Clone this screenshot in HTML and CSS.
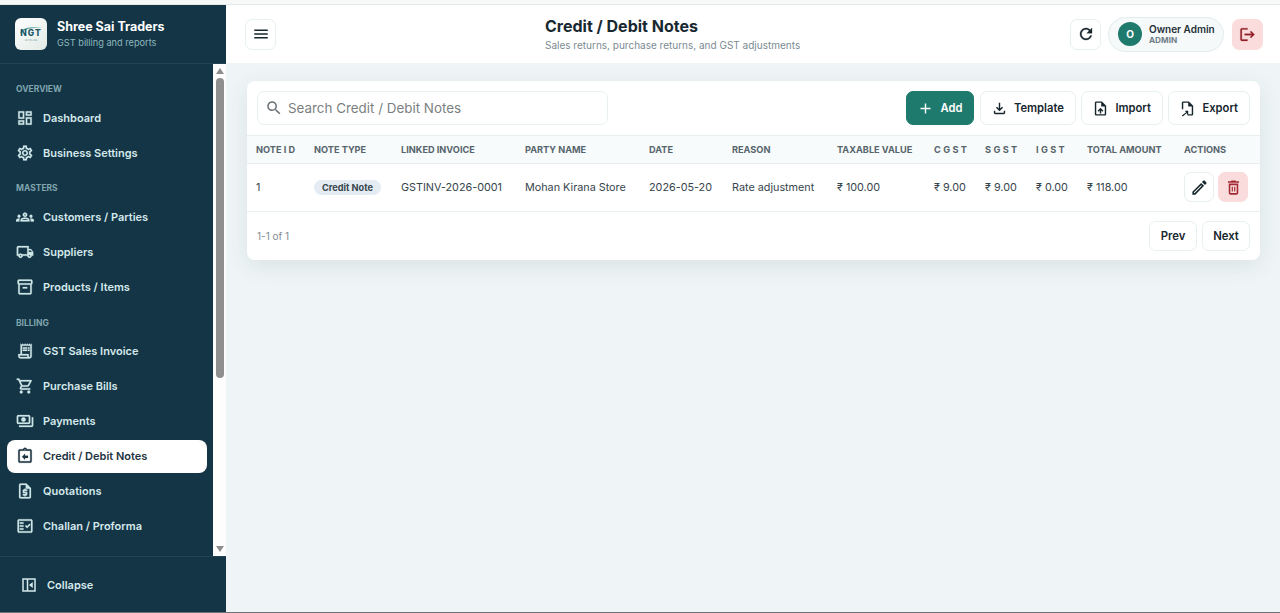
FILE: index.html
```
<!DOCTYPE html>
<html lang="en">
<head>
<meta charset="utf-8">
<title>Credit / Debit Notes</title>
<link rel="stylesheet" href="styles.css">
</head>
<body>
<div class="app">
  <aside class="sidebar">
    <div class="brand">
      <div class="logo">
        <svg class="logo-swoosh" viewBox="0 0 32 32"><path d="M5 15C7 10 15 8 27 10 16 9.5 9 11 6.5 15z"/></svg>
        <span class="logo-text">NGT</span><span class="logo-sub">GST BILLING</span>
      </div>
      <div class="brand-text">
        <div class="brand-name">Shree Sai Traders</div>
        <div class="brand-sub">GST billing and reports</div>
      </div>
    </div>
    <div class="nav-wrap">
      <nav class="nav">
        <div class="section first">OVERVIEW</div>
        <a class="item"><svg viewBox="0 0 24 24"><path d="M19 5v2h-4V5h4M9 5v6H5V5h4m10 8v6h-4v-6h4M9 17v2H5v-2h4M21 3h-8v6h8V3zM11 3H3v10h8V3zm10 8h-8v10h8V11zm-10 4H3v6h8v-6z"/></svg>Dashboard</a>
        <a class="item"><svg viewBox="0 0 24 24"><path d="M19.43 12.98c.04-.32.07-.64.07-.98 0-.34-.03-.66-.07-.98l2.11-1.65c.19-.15.24-.42.12-.64l-2-3.46c-.09-.16-.26-.25-.44-.25-.06 0-.12.01-.17.03l-2.49 1c-.52-.4-1.08-.73-1.69-.98l-.38-2.65C14.46 2.18 14.25 2 14 2h-4c-.25 0-.46.18-.49.42l-.38 2.65c-.61.25-1.17.59-1.69.98l-2.49-1c-.06-.02-.12-.03-.18-.03-.17 0-.34.09-.43.25l-2 3.46c-.13.22-.07.49.12.64l2.11 1.65c-.04.32-.07.65-.07.98 0 .33.03.66.07.98l-2.11 1.65c-.19.15-.24.42-.12.64l2 3.46c.09.16.26.25.44.25.06 0 .12-.01.17-.03l2.49-1c.52.4 1.08.73 1.69.98l.38 2.65c.03.24.24.42.49.42h4c.25 0 .46-.18.49-.42l.38-2.65c.61-.25 1.17-.59 1.69-.98l2.49 1c.06.02.12.03.18.03.17 0 .34-.09.43-.25l2-3.46c.12-.22.07-.49-.12-.64l-2.11-1.65zm-1.98-1.71c.04.31.05.52.05.73 0 .21-.02.43-.05.73l-.14 1.13.89.7 1.08.84-.7 1.21-1.27-.51-1.04-.42-.9.68c-.43.32-.84.56-1.25.73l-1.06.43-.16 1.13-.2 1.35h-1.4l-.19-1.35-.16-1.13-1.06-.43c-.43-.18-.83-.41-1.23-.71l-.91-.7-1.06.43-1.27.51-.7-1.21 1.08-.84.89-.7-.14-1.13c-.03-.31-.05-.54-.05-.74s.02-.43.05-.73l.14-1.13-.89-.7-1.08-.84.7-1.21 1.27.51 1.04.42.9-.68c.43-.32.84-.56 1.25-.73l1.06-.43.16-1.13.2-1.35h1.39l.19 1.35.16 1.13 1.06.43c.43.18.83.41 1.23.71l.91.7 1.06-.43 1.27-.51.7 1.21-1.07.85-.89.7.14 1.13zM12 8c-2.21 0-4 1.79-4 4s1.79 4 4 4 4-1.79 4-4-1.79-4-4-4zm0 6c-1.1 0-2-.9-2-2s.9-2 2-2 2 .9 2 2-.9 2-2 2z"/></svg>Business Settings</a>
        <div class="section">MASTERS</div>
        <a class="item"><svg viewBox="0 0 24 24"><path d="M4 13c1.1 0 2-.9 2-2s-.9-2-2-2-2 .9-2 2 .9 2 2 2zm1.13 1.1C4.76 14.04 4.39 14 4 14c-.99 0-1.93.21-2.78.58C.48 14.9 0 15.62 0 16.43V18h4.5v-1.61c0-.83.23-1.61.63-2.29zM20 13c1.1 0 2-.9 2-2s-.9-2-2-2-2 .9-2 2 .9 2 2 2zm4 3.43c0-.81-.48-1.53-1.22-1.85-.85-.37-1.79-.58-2.78-.58-.39 0-.76.04-1.13.1.4.68.63 1.46.63 2.29V18H24v-1.57zm-7.76-2.78c-1.17-.52-2.61-.9-4.24-.9-1.63 0-3.07.39-4.24.9C6.68 14.13 6 15.21 6 16.39V18h12v-1.61c0-1.18-.68-2.26-1.76-2.74zM8.07 16c.09-.23.13-.39.91-.69.97-.38 1.99-.56 3.02-.56s2.05.18 3.02.56c.77.3.81.46.91.69H8.07zM12 8c.55 0 1 .45 1 1s-.45 1-1 1-1-.45-1-1 .45-1 1-1m0-2c-1.66 0-3 1.34-3 3s1.34 3 3 3 3-1.34 3-3-1.34-3-3-3z"/></svg>Customers / Parties</a>
        <a class="item"><svg viewBox="0 0 24 24"><path d="M20 8h-3V4H3c-1.1 0-2 .9-2 2v11h2c0 1.66 1.34 3 3 3s3-1.34 3-3h6c0 1.66 1.34 3 3 3s3-1.34 3-3h2v-5l-3-4zm-.5 1.5 1.96 2.5H17V9.5h2.5zM6 18c-.55 0-1-.45-1-1s.45-1 1-1 1 .45 1 1-.45 1-1 1zm2.22-3c-.55-.61-1.33-1-2.22-1s-1.67.39-2.22 1H3V6h12v9H8.22zM18 18c-.55 0-1-.45-1-1s.45-1 1-1 1 .45 1 1-.45 1-1 1z"/></svg>Suppliers</a>
        <a class="item"><svg viewBox="0 0 24 24"><path d="M20 2H4c-1 0-2 .9-2 2v3.01c0 .72.43 1.34 1 1.69V20c0 1.1 1.1 2 2 2h14c.9 0 2-.9 2-2V8.7c.57-.35 1-.97 1-1.69V4c0-1.1-1-2-2-2zm-1 18H5V9h14v11zm1-13H4V4h16v3zM9 12h6v2H9z"/></svg>Products / Items</a>
        <div class="section billing">BILLING</div>
        <a class="item"><svg viewBox="0 0 24 24"><path d="M19.5 3.5 18 2l-1.5 1.5L15 2l-1.5 1.5L12 2l-1.5 1.5L9 2 7.5 3.5 6 2v14H3v3c0 1.66 1.34 3 3 3h12c1.66 0 3-1.34 3-3V2l-1.5 1.5zM15 20H6c-.55 0-1-.45-1-1v-1h10v2zm4-1c0 .55-.45 1-1 1s-1-.45-1-1v-3H8V5h11v14zM9 7h6v2H9zM16 7h2v2h-2zM9 10h6v2H9zM16 10h2v2h-2z"/></svg>GST Sales Invoice</a>
        <a class="item"><svg viewBox="0 0 24 24"><path d="M15.55 13c.75 0 1.41-.41 1.75-1.03l3.58-6.49c.37-.66-.11-1.48-.87-1.48H5.21l-.94-2H1v2h2l3.6 7.59-1.35 2.44C4.52 15.37 5.48 17 7 17h12v-2H7l1.1-2h7.45zM6.16 6h12.15l-2.76 5H8.53L6.16 6zM7 18c-1.1 0-1.99.9-1.99 2S5.9 22 7 22s2-.9 2-2-.9-2-2-2zm10 0c-1.1 0-1.99.9-1.99 2s.89 2 1.99 2 2-.9 2-2-.9-2-2-2z"/></svg>Purchase Bills</a>
        <a class="item"><svg viewBox="0 0 24 24"><path d="M19 14V6c0-1.1-.9-2-2-2H3c-1.1 0-2 .9-2 2v8c0 1.1.9 2 2 2h14c1.1 0 2-.9 2-2zm-2 0H3V6h14v8zm-7-7c-1.66 0-3 1.34-3 3s1.34 3 3 3 3-1.34 3-3-1.34-3-3-3zm13 0v11c0 1.1-.9 2-2 2H4v-2h17V7h2z"/></svg>Payments</a>
        <a class="item active"><svg viewBox="0 0 24 24"><path d="M19 3h-4.18C14.4 1.84 13.3 1 12 1s-2.4.84-2.82 2H5c-.14 0-.27.01-.4.04-.39.08-.74.28-1.01.55-.18.18-.33.4-.43.64-.1.23-.16.49-.16.77v14c0 .27.06.54.16.78s.25.45.43.64c.27.27.62.47 1.01.55.13.02.26.03.4.03h14c1.1 0 2-.9 2-2V5c0-1.1-.9-2-2-2zm-7-.25c.41 0 .75.34.75.75s-.34.75-.75.75-.75-.34-.75-.75.34-.75.75-.75zM19 19H5V5h14v14zM12 9l-4 4 4 4v-2.5h4v-3h-4z"/></svg>Credit / Debit Notes</a>
        <a class="item"><svg viewBox="0 0 24 24"><path d="M14 2H6c-1.1 0-1.99.9-1.99 2L4 20c0 1.1.89 2 1.99 2H18c1.1 0 2-.9 2-2V8l-6-6zM6 20V4h7v5h5v11H6zm5-1h2v-1h1c.55 0 1-.45 1-1v-3c0-.55-.45-1-1-1h-3v-1h4v-2h-2V9h-2v1h-1c-.55 0-1 .45-1 1v3c0 .55.45 1 1 1h3v1H9v2h2v1z"/></svg>Quotations</a>
        <a class="item"><svg viewBox="0 0 24 24"><path d="M20 3H4c-1.1 0-2 .9-2 2v14c0 1.1.9 2 2 2h16c1.1 0 2-.9 2-2V5c0-1.1-.9-2-2-2zm0 16H4V5h16v14zM19.41 10.42 17.99 9l-3.17 3.17-1.41-1.42L12 12.16 14.82 15zM5 7h5v2H5zM5 11h5v2H5zM5 15h5v2H5z"/></svg>Challan / Proforma</a>
      </nav>
      <div class="scrollbar">
        <span class="arrow up"></span>
        <div class="track"><div class="thumb"></div></div>
        <span class="arrow down"></span>
      </div>
    </div>
    <div class="collapse">
      <svg viewBox="0 0 24 24"><path d="M3 3h18v18H3V3zm2 2v14h4V5H5zm6 0v14h8V5h-8zm6 3v8l-5-4 5-4z"/></svg>
      Collapse
    </div>
  </aside>
  <main class="main">
    <header class="topbar">
      <button class="btn square"><svg viewBox="0 0 24 24"><path d="M3 18h18v-2H3v2zm0-5h18v-2H3v2zm0-7v2h18V6H3z"/></svg></button>
      <div class="title-block">
        <h1>Credit / Debit Notes</h1>
        <p>Sales returns, purchase returns, and GST adjustments</p>
      </div>
      <div class="top-actions">
        <button class="btn square refresh"><svg viewBox="0 0 24 24"><path d="M17.65 6.35C16.2 4.9 14.21 4 12 4c-4.42 0-7.99 3.58-7.99 8s3.57 8 7.99 8c3.73 0 6.84-2.55 7.73-6h-2.08c-.82 2.33-3.04 4-5.65 4-3.31 0-6-2.69-6-6s2.69-6 6-6c1.66 0 3.14.69 4.22 1.78L13 11h7V4l-2.35 2.35z"/></svg></button>
        <div class="user">
          <span class="avatar">O</span>
          <span class="user-text"><span class="user-name">Owner Admin</span><span class="user-role">ADMIN</span></span>
        </div>
        <button class="btn square danger logout"><svg viewBox="0 0 24 24"><path d="M17 7l-1.41 1.41L18.17 11H8v2h10.17l-2.58 2.58L17 17l5-5zM4 5h8V3H4c-1.1 0-2 .9-2 2v14c0 1.1.9 2 2 2h8v-2H4V5z"/></svg></button>
      </div>
    </header>
    <section class="content">
      <div class="card">
        <div class="toolbar">
          <label class="search">
            <svg viewBox="0 0 24 24"><path d="M15.5 14h-.79l-.28-.27C15.41 12.59 16 11.11 16 9.5 16 5.91 13.09 3 9.5 3S3 5.91 3 9.5 5.91 16 9.5 16c1.61 0 3.09-.59 4.23-1.57l.27.28v.79l5 4.99L20.49 19l-4.99-5zm-6 0C7.01 14 5 11.99 5 9.5S7.01 5 9.5 5 14 7.01 14 9.5 11.99 14 9.5 14z"/></svg>
            <span>Search Credit / Debit Notes</span>
          </label>
          <div class="tools">
            <button class="btn tool primary"><svg viewBox="0 0 24 24"><path d="M19 13h-6v6h-2v-6H5v-2h6V5h2v6h6v2z"/></svg>Add</button>
            <button class="btn tool"><svg viewBox="0 0 24 24"><path d="M18 15v3H6v-3H4v3c0 1.1.9 2 2 2h12c1.1 0 2-.9 2-2v-3h-2zm-1-4-1.41-1.41L13 12.17V4h-2v8.17L8.41 9.59 7 11l5 5 5-5z"/></svg>Template</button>
            <button class="btn tool"><svg viewBox="0 0 24 24"><path d="M14 2H6c-1.1 0-1.99.9-1.99 2L4 20c0 1.1.89 2 1.99 2H18c1.1 0 2-.9 2-2V8l-6-6zm4 18H6V4h7v5h5v11zM8 15.01l1.41 1.41L11 14.84V19h2v-4.16l1.59 1.59L16 15.01 12.01 11 8 15.01z"/></svg>Import</button>
            <button class="btn tool"><svg viewBox="0 0 24 24"><path d="M14 2H6c-1.1 0-2 .9-2 2v9h2V4h7v5h5v11h-6v2h6c1.1 0 2-.9 2-2V8l-6-6zM9 15v2h1.6L4 22l1.4 1.4L11 18.4V20h2v-5H9z"/></svg>Export</button>
          </div>
        </div>
        <table class="grid">
          <colgroup>
            <col class="c58"><col class="c87"><col class="c124"><col class="c124"><col class="c83"><col class="c105"><col class="c97"><col class="c51"><col class="c51"><col class="c51"><col class="c97"><col class="c85">
          </colgroup>
          <thead>
            <tr><th>NOTE I D</th><th>NOTE TYPE</th><th>LINKED INVOICE</th><th>PARTY NAME</th><th>DATE</th><th>REASON</th><th>TAXABLE VALUE</th><th class="sp">C G S T</th><th class="sp">S G S T</th><th class="sp">I G S T</th><th>TOTAL AMOUNT</th><th>ACTIONS</th></tr>
          </thead>
          <tbody>
            <tr>
              <td>1</td><td><span class="pill">Credit Note</span></td><td>GSTINV-2026-0001</td><td>Mohan Kirana Store</td><td>2026-05-20</td><td>Rate adjustment</td><td>₹ 100.00</td><td>₹ 9.00</td><td>₹ 9.00</td><td>₹ 0.00</td><td>₹ 118.00</td>
              <td class="actions-cell"><div class="row-actions">
                <button class="btn icon"><svg viewBox="0 0 24 24"><path d="M3 17.25V21h3.75L17.81 9.94l-3.75-3.75L3 17.25zM5.92 19H5v-.92l9.06-9.06.92.92L5.92 19zM20.71 7.04c.39-.39.39-1.02 0-1.41l-2.34-2.34c-.2-.2-.45-.29-.71-.29s-.51.1-.7.29l-1.83 1.83 3.75 3.75 1.83-1.83z"/></svg></button>
                <button class="btn icon danger"><svg viewBox="0 0 24 24"><path d="M16 9v10H8V9h8m-1.5-6h-5l-1 1H5v2h14V4h-3.5l-1-1zM18 7H6v12c0 1.1.9 2 2 2h8c1.1 0 2-.9 2-2V7zM9.75 11h1.5v6h-1.5zM12.75 11h1.5v6h-1.5z"/></svg></button>
              </div></td>
            </tr>
          </tbody>
        </table>
        <div class="pager">
          <span class="count">1-1 of 1</span>
          <div class="pager-btns"><button class="btn page">Prev</button><button class="btn page">Next</button></div>
        </div>
      </div>
    </section>
  </main>
</div>
</body>
</html>
```
FILE: styles.css
```
* { box-sizing: border-box; }
html, body { height: 100%; }
body { margin: 0; background: #f7f8f8; font-family: Inter, "Liberation Sans", sans-serif; overflow: hidden; }
.app { height: 609px; margin-top: 4px; display: flex; border-top: 1px solid #e4e8e8; border-bottom: 1px solid #6b7378; }
svg { display: block; fill: currentColor; flex: none; }

.sidebar { width: 226px; flex: none; background: #143545; display: flex; flex-direction: column; color: #d8ecef; }
.brand { height: 59px; flex: none; display: flex; align-items: center; gap: 10px; padding: 0 15px; border-bottom: 1px solid #1f4454; }
.logo { position: relative; width: 32px; height: 32px; border-radius: 6px; background: linear-gradient(135deg, #ffffff, #e2ebe6); display: flex; flex-direction: column; align-items: center; justify-content: center; color: #1b5566; }
.logo-swoosh { position: absolute; inset: 0; width: 32px; height: 32px; color: #5fa3a0; }
.logo-text { position: relative; font-size: 8.5px; font-weight: 800; letter-spacing: 1px; line-height: 9px; margin-top: 3px; }
.logo-sub { font-size: 2px; line-height: 4px; color: #7a9aa0; }
.brand-name { font-size: 12.5px; font-weight: 700; color: #fff; line-height: 16px; white-space: nowrap; }
.brand-sub { font-size: 9.2px; line-height: 12px; margin-top: 2px; color: #8fb8bf; white-space: nowrap; }

.nav-wrap { flex: 1; min-height: 0; display: flex; }
.nav { flex: 1; min-width: 0; padding: 0 6px 0 7px; overflow: hidden; }
.section { font-size: 8.5px; font-weight: 700; color: #7fa5ae; line-height: 12px; padding-left: 9px; margin-top: 12px; margin-bottom: 7px; }
.section.first { margin-top: 19px; }
.section.billing { margin-top: 13px; margin-bottom: 6px; }
.item { display: flex; align-items: center; gap: 9px; height: 33px; margin-bottom: 2px; padding: 0 0 2px 9px; border-radius: 8px; font-size: 11px; font-weight: 600; color: #d5e9ec; white-space: nowrap; }
.item svg { width: 18px; height: 18px; color: #cfe6e9; margin-top: 1px; stroke: currentColor; stroke-width: 0.3; }
.item.active { background: #fff; color: #1d3340; }
.item.active svg { color: #1d3340; }

.scrollbar { width: 13px; flex: none; background: #fdfdfd; display: flex; flex-direction: column; align-items: center; }
.arrow { width: 0; height: 0; flex: none; border-left: 4px solid transparent; border-right: 4px solid transparent; margin: 4px 0; }
.arrow.up { border-bottom: 6px solid #8d8d8d; }
.arrow.down { border-top: 6px solid #8d8d8d; }
.track { flex: 1; width: 100%; display: flex; justify-content: center; }
.thumb { width: 8px; height: 300px; border-radius: 4px; background: #8f8f8f; }

.collapse { height: 56px; flex: none; display: flex; align-items: center; gap: 9px; padding-left: 20px; border-top: 1px solid #1f4454; font-size: 11px; font-weight: 600; color: #d5e9ec; }
.collapse svg { width: 18px; height: 18px; }

.main { flex: 1; min-width: 0; background: #eff5f6; display: flex; flex-direction: column; }
.topbar { height: 58px; flex: none; background: #fff; display: flex; align-items: center; padding: 0 17px 0 19px; }
.title-block { margin-left: 269px; }
h1 { margin: 0; font-size: 16px; line-height: 21px; font-weight: 700; color: #182830; }
.title-block p { margin: 1px 0 0; font-size: 10px; line-height: 14px; color: #7c8a92; }
.top-actions { margin-left: auto; display: flex; align-items: center; gap: 8px; }

button { font-family: inherit; }
.btn { border: 1px solid #e7eff0; background: #fff; border-radius: 7px; color: #17262d; display: inline-flex; align-items: center; justify-content: center; padding: 0; }
.square { width: 31px; height: 31px; }
.square svg { width: 18px; height: 18px; }
.refresh svg { stroke: currentColor; stroke-width: 0.4; }
.danger { background: #fbdcdc; border-color: #fbdcdc; color: #8f1f27; }
.logout svg { width: 17px; height: 17px; stroke: currentColor; stroke-width: 0.4; }
.user { display: flex; align-items: center; height: 35px; width: 116px; margin-left: -1px; padding-left: 9px; gap: 7px; border: 1px solid #e2ecec; border-radius: 18px; background: #f5f9f9; }
.avatar { width: 24px; height: 24px; border-radius: 50%; background: #1f7a6e; color: #fff; font-size: 10px; font-weight: 700; display: flex; align-items: center; justify-content: center; }
.user-text { display: flex; flex-direction: column; }
.user-name { font-size: 10px; font-weight: 600; line-height: 12px; color: #1f2f37; white-space: nowrap; }
.user-role { font-size: 8.2px; font-weight: 700; line-height: 10px; color: #707e88; }

.content { flex: 1; padding: 18px 20px 0 21px; }
.card { background: #fff; border-radius: 8px; box-shadow: 0 6px 22px rgba(30, 70, 80, 0.1); }
.toolbar { height: 54px; display: flex; align-items: center; justify-content: space-between; padding: 0 10px; }
.search { width: 351px; height: 34px; display: flex; align-items: center; gap: 5px; padding-left: 7px; border: 1px solid #e8eff0; border-radius: 7px; color: #7c7f82; font-size: 13.4px; }
.search svg { width: 18px; height: 18px; color: #6b7378; }
.tools { display: flex; gap: 5.5px; }
.tool { height: 34px; padding: 0 11px 0 10px; gap: 6px; font-size: 11.2px; font-weight: 600; }
.tool svg { width: 17px; height: 17px; }
.primary { background: #1f7a6e; border-color: #1f7a6e; color: #fff; }

.grid { width: 100%; table-layout: fixed; border-collapse: collapse; }
.c51 { width: 51px; } .c58 { width: 58px; } .c83 { width: 83px; } .c85 { width: 85px; } .c87 { width: 87px; } .c97 { width: 97px; } .c105 { width: 105px; } .c124 { width: 124px; }
th { height: 28px; padding: 0 0 0 9px; text-align: left; font-size: 9.2px; font-weight: 700; color: #56646c; background: #f8fbfb; border-top: 1px solid #e8eff0; border-bottom: 1px solid #e8eff0; white-space: nowrap; }
th.sp { letter-spacing: 0.1px; }
td { height: 48px; padding: 0 0 0 9px; font-size: 10.8px; color: #37454d; border-bottom: 1px solid #e8eff0; white-space: nowrap; }
td.actions-cell { padding-bottom: 1px; }
.pill { display: inline-block; height: 15px; line-height: 15px; padding: 0 8px; border-radius: 8px; background: #e5ebf3; font-size: 9.2px; font-weight: 700; color: #37454d; }
.row-actions { display: flex; gap: 4px; }
.icon { width: 30px; height: 30px; }
.icon svg { width: 19px; height: 19px; }
.icon.danger { color: #a32a33; }

.pager { height: 48px; display: flex; align-items: center; justify-content: space-between; padding: 0 10px; }
.count { font-size: 10px; color: #7f8b92; }
.pager-btns { display: flex; gap: 5px; }
.page { height: 30px; width: 48px; font-size: 11.3px; font-weight: 600; }
```
